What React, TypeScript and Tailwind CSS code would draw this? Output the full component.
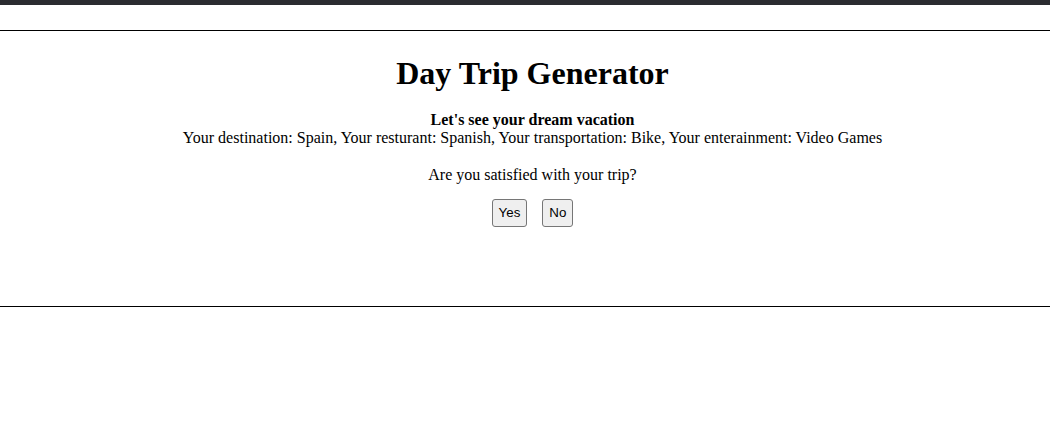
import React from 'react';

const App: React.FC = () => {
  const trip = {
    destination: 'Spain',
    resturant: 'Spanish',
    transportation: 'Bike',
    entertainment: 'Video Games',
  };

  return (
    <div className="min-h-[447px] bg-white text-black" style={{ fontFamily: '"Liberation Serif", "Times New Roman", serif' }}>
      {/* top bar */}
      <div className="h-[5px] bg-[#2b2c30]"></div>
      <div className="h-[25px]"></div>
      <hr className="border-t border-black" />

      <div className="flex flex-col items-center text-center h-[275px] pl-[15px]">
        <h1 className="mt-[24px] text-[32px] leading-[37px] font-bold">Day Trip Generator</h1>
        <div className="mt-[19px] text-[16px] leading-[18px]">
          <p className="font-bold">Let's see your dream vacation</p>
          <p>
            Your destination: {trip.destination}, Your resturant: {trip.resturant}, Your transportation:{' '}
            {trip.transportation}, Your enterainment: {trip.entertainment}
          </p>
        </div>
        <p className="mt-[19px] text-[16px] leading-[18px]">Are you satisfied with your trip?</p>
        <div className="mt-[15px] flex gap-[15px]">
          <button
            className="px-[6px] py-[5px] text-[13.33px] leading-[16px] bg-[#efefef] border border-[#767676] rounded-[3px]"
            style={{ fontFamily: '"Liberation Sans", Arial, sans-serif' }}
          >
            Yes
          </button>
          <button
            className="px-[6px] py-[5px] text-[13.33px] leading-[16px] bg-[#efefef] border border-[#767676] rounded-[3px]"
            style={{ fontFamily: '"Liberation Sans", Arial, sans-serif' }}
          >
            No
          </button>
        </div>
      </div>

      <hr className="border-t border-black" />
    </div>
  );
};

export default App;
